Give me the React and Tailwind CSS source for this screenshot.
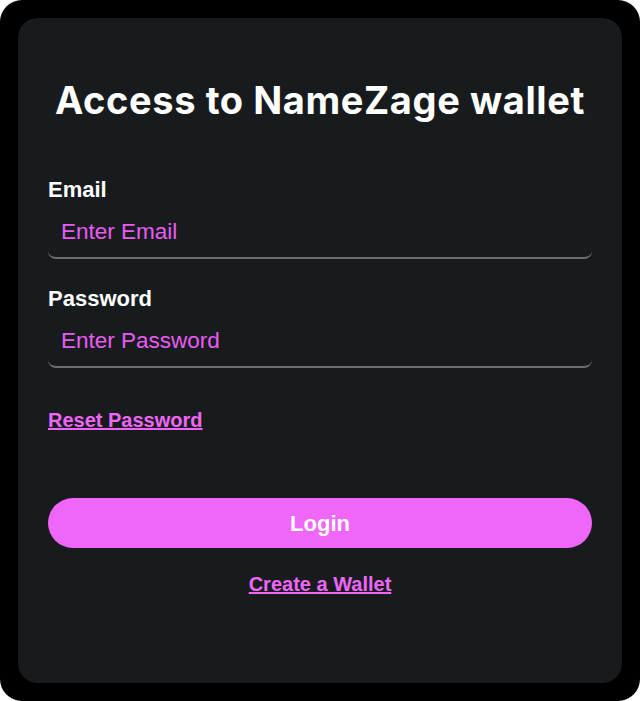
export default function App() {
  return (
    <div className="w-[640px] h-[701px] bg-black rounded-[22px] p-[18px]" style={{ fontFamily: '"Liberation Sans", Arial, sans-serif' }}>
      <div className="h-full bg-[#181b1e] rounded-[20px] px-[30px] pt-[58px]">
        {/* Title */}
        <h1 className="text-center text-white text-[38px] font-bold leading-[48px] tracking-[0.6px]" style={{ fontFamily: 'Inter, "Noto Sans", sans-serif' }}>
          Access to NameZage wallet
        </h1>

        {/* Form */}
        <div className="mt-[54px]">
          <label className="block text-white text-[22px] font-bold leading-[24px]">Email</label>
          <input
            type="email"
            placeholder="Enter Email"
            className="block w-full mt-[17px] px-[13px] pb-[12px] text-[22.5px] leading-[26px] bg-transparent text-[#e85cf4] placeholder:text-[#e85cf4] outline-none border-b-2 border-[#6b6d70] rounded-b-lg"
          />

          <label className="block mt-[28px] text-white text-[22px] font-bold leading-[24px]">Password</label>
          <input
            type="password"
            placeholder="Enter Password"
            className="block w-full mt-[17px] px-[13px] pb-[12px] text-[22.5px] leading-[26px] bg-transparent text-[#e85cf4] placeholder:text-[#e85cf4] outline-none border-b-2 border-[#6b6d70] rounded-b-lg"
          />

          <a href="#" className="inline-block mt-[40px] text-[20px] font-bold leading-[24px] text-[#ef66f9] underline">
            Reset Password
          </a>

          <button className="block w-full mt-[64px] h-[50px] rounded-full bg-[#ef66f9] text-white text-[22px] font-bold">
            Login
          </button>

          <div className="text-center mt-[24px]">
            <a href="#" className="text-[20px] font-bold leading-[24px] text-[#ef66f9] underline">
              Create a Wallet
            </a>
          </div>
        </div>
      </div>
    </div>
  );
}
